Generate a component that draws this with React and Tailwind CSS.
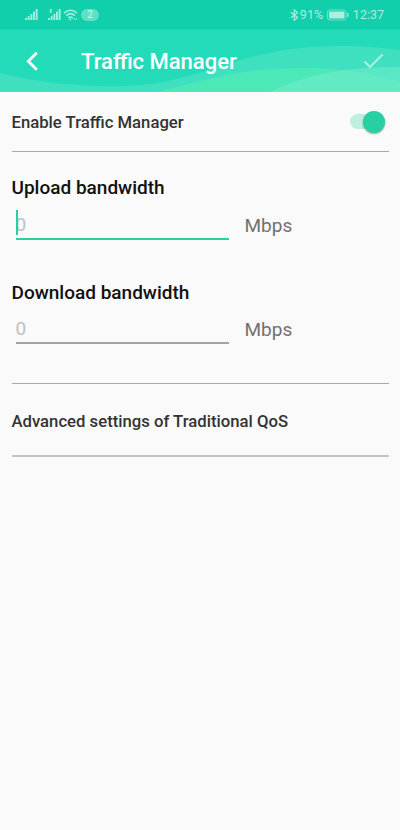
import React from 'react';

const SignalIcon = ({ x = 0 }) => (
  <g transform={`translate(${x} 0)`}>
    <rect x="0" y="9" width="1.9" height="2" />
    <rect x="2.7" y="7.2" width="1.9" height="3.8" />
    <rect x="5.4" y="5" width="1.9" height="6" />
    <rect x="8" y="2.6" width="1.9" height="8.4" />
    <rect x="10.7" y="0" width="1.9" height="11" />
  </g>
);

const StatusBar = () => (
  <div className="h-[30px] bg-[#12cfab] border-b border-[#1bd4b1] text-[#a9eddd] flex items-center justify-between pl-[25px] pr-4">
    <div className="flex items-center pt-px">
      <svg width="54" height="13" viewBox="0 0 54 13" fill="currentColor">
        <SignalIcon />
        <rect x="24.8" y="0" width="2" height="4" opacity="0.8" />
        <SignalIcon x={23} />
        <g fill="none" stroke="currentColor" strokeWidth="1.5">
          <path d="M39 4.2c3.8-3.8 9.2-3.8 13 0" />
          <path d="M41.2 6.8c2.6-2.6 6-2.6 8.6 0" />
          <path d="M43.3 9.1c1.4-1.4 3-1.4 4.4 0" />
        </g>
        <circle cx="45.3" cy="10.5" r="1" />
        <path d="M48 10.5l1.3-1.5 1.3 1.5zM50.2 9.5l1.3 1.5 1.2-1.5z" />
      </svg>
      <span className="ml-[2px] w-[18px] h-3 rounded-full bg-[#5fdfc5] text-[#d3f7ee] text-[10px] leading-3 text-center">2</span>
    </div>
    <div className="flex items-center text-[12.5px] leading-4">
      <svg width="9" height="12" viewBox="0 0 9 12" fill="none" stroke="currentColor" strokeWidth="1.2">
        <path d="M1 3.2l6.5 5.4L4.3 11.2V0.8l3.2 2.6L1 8.8" />
      </svg>
      <span className="ml-px w-[27px] whitespace-nowrap text-[12.5px]">91%</span>
      <svg className="mr-1" width="22" height="12" viewBox="0 0 22 12">
        <rect x="0.5" y="1" width="18.5" height="10" rx="2" fill="none" stroke="#6de0ca" />
        <rect x="2" y="2.5" width="15.5" height="7" rx="0.5" fill="#aeeee0" />
        <rect x="20" y="4" width="1.5" height="4" rx="0.5" fill="#8ae7d4" />
      </svg>
      <span>12:37</span>
    </div>
  </div>
);

const Header = () => (
  <header className="relative h-[62px] bg-[#24dbb9] overflow-hidden">
    <svg className="absolute inset-0" width="400" height="62" viewBox="0 0 400 62">
      <path d="M0 43C45 54 85 57 125 56C205 54 235 16 340 16C362 16 384 18 400 20V62H0Z" fill="#3ee0bf" />
      <path d="M157 62C215 48 240 38 305 38C345 38 372 44 400 52V62Z" fill="#4de8b8" />
      <path d="M270 62C310 43 345 37 400 37V62Z" fill="#7cf0ce" fillOpacity="0.45" />
    </svg>
    <div className="relative h-full flex items-center">
      <svg className="ml-[25px]" width="14" height="20" viewBox="0 0 14 20" fill="none" stroke="white" strokeWidth="2.8">
        <path d="M11.8 1.8L3.3 10.3l8.5 8.5" />
      </svg>
      <h1 className="ml-[42px] text-[22px] font-medium text-white">Traffic Manager</h1>
      <svg className="ml-auto mr-4" width="21" height="16" viewBox="0 0 21 16" fill="none" stroke="#a6f2df" strokeWidth="2.2">
        <path d="M1.5 8.5l5.5 5.5L19.5 1.5" />
      </svg>
    </div>
  </header>
);

const BandwidthField = ({ label, focused }) => (
  <div>
    <h2 className="text-[19px] leading-6 font-medium text-[#111]">{label}</h2>
    <div className={focused ? 'mt-[9px] flex items-start' : 'mt-2 flex items-start'}>
      <div
        className={
          focused
            ? 'relative ml-1 w-[213px] h-[31px] border-b-2 border-[#28cfa2]'
            : 'relative ml-1 w-[213px] h-[31px] border-b-2 border-[#a3a3a3]'
        }
      >
        {focused && <span className="absolute left-0 top-[1px] w-[2px] h-[25px] bg-[#28cfa2]" />}
        <span className="block pt-[2px] text-[19px] leading-7 text-[#c0c0c0]">0</span>
      </div>
      <span className="ml-4 pt-[3px] text-[19px] leading-7 text-[#717171]">Mbps</span>
    </div>
  </div>
);

const App = () => {
  return (
    <div className="w-[400px] h-[830px] bg-[#fafafa] overflow-hidden font-['Roboto',sans-serif]">
      <StatusBar />
      <Header />
      <main className="px-[11.5px] flex flex-col">
        <div className="h-[60px] border-b border-[#a8a8a8] flex items-center justify-between">
          <span className="pt-[2px] text-[16.7px] font-medium text-[#333]">Enable Traffic Manager</span>
          <div className="mr-[3.5px] w-[35px] h-[15px] rounded-full bg-[#beeee0] flex items-center justify-end">
            <span className="w-[22px] h-[22px] rounded-full bg-[#28cfa2] shadow-[0_1px_2px_rgba(0,0,0,0.35)]" />
          </div>
        </div>
        <div className="h-[232px] pt-6 border-b border-[#a8a8a8] flex flex-col gap-[41px]">
          <BandwidthField label="Upload bandwidth" focused />
          <BandwidthField label="Download bandwidth" />
        </div>
        <div className="h-[73px] border-b-2 border-[#c4c4c4] flex items-center">
          <span className="pt-[5px] text-[16.7px] font-medium text-[#333]">Advanced settings of Traditional QoS</span>
        </div>
      </main>
    </div>
  );
};

export default App;
